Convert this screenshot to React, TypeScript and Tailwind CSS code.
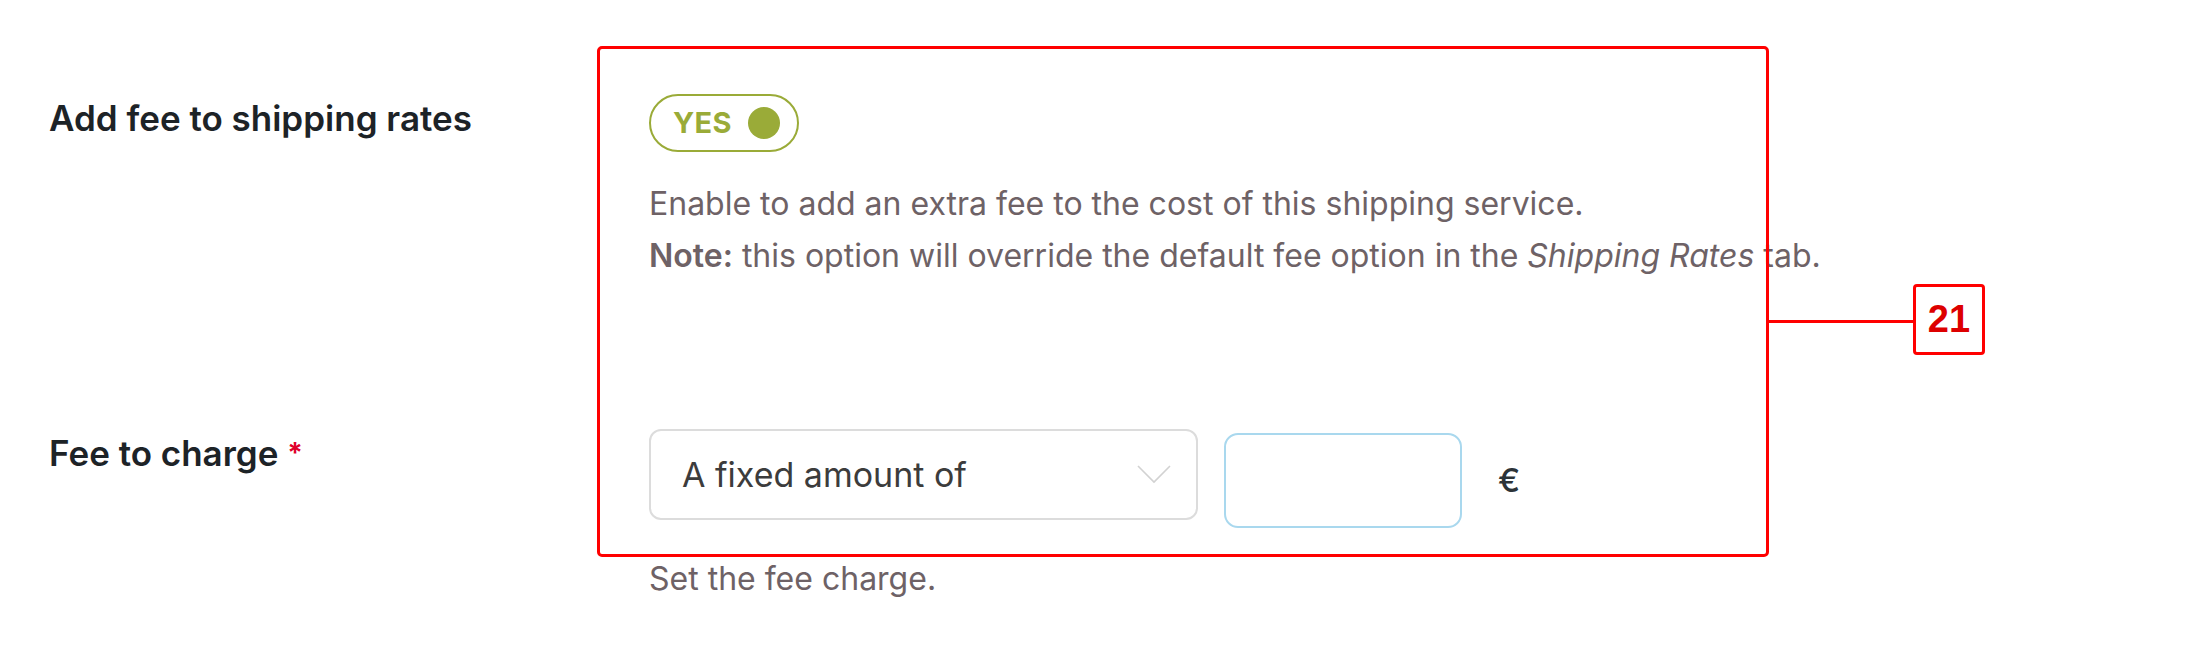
export default function App() {
  return (
    <div className="relative w-[2202px] h-[658px] bg-white font-['Inter',sans-serif] overflow-hidden">
      <div className="pl-[49px] pt-[94px]">
        <div className="flex items-start">
          <div className="w-[600px] pt-[4px] text-[35px] leading-[40px] font-semibold text-[#1d2327]">
            Add fee to shipping rates
          </div>
          <div>
            <Toggle />
            <div className="mt-[26px] text-[32px] leading-[52px] text-[#6e6266]">
              <p>Enable to add an extra fee to the cost of this shipping service.</p>
              <p>
                <span className="font-semibold">Note:</span> this option will override the default fee
                option in the <em>Shipping Rates</em> tab.
              </p>
            </div>
          </div>
        </div>

        <div className="flex items-start mt-[147px]">
          <div className="w-[600px] pt-[4px] text-[35px] leading-[40px] font-semibold text-[#1d2327]">
            Fee to charge <span className="text-[#e0002a] font-bold align-top text-[28px]">*</span>
          </div>
          <div>
            <div className="flex items-start">
              <div className="w-[549px] h-[91px] border-2 border-[#dcdcdc] rounded-[12px] flex items-center justify-between pl-[31px] pr-[25px]">
                <span className="text-[34px] text-[#3c3c3c]">A fixed amount of</span>
                <svg width="34" height="19" viewBox="0 0 34 19" fill="none">
                  <polyline points="1,1 17,17 33,1" stroke="#d2d2d2" strokeWidth="1.6" />
                </svg>
              </div>
              <div className="ml-[26px] mt-[4px] w-[238px] h-[95px] border-2 border-[#a9d8ee] rounded-[14px]" />
              <div className="ml-[36px] mt-[4px] h-[95px] flex items-center text-[33px] font-medium text-[#2c3338]">
                €
              </div>
            </div>
            <p className="mt-[33px] text-[32px] leading-[36px] text-[#6e6266]">Set the fee charge.</p>
          </div>
        </div>
      </div>

      {/* annotation overlay */}
      <div className="absolute left-[597px] top-[46px] w-[1172px] h-[511px] border-[3px] border-[#ff0000] rounded-[5px]" />
      <div className="absolute left-[1768px] top-[320px] w-[146px] h-[3px] bg-[#ff0000]" />
      <div className="absolute left-[1913px] top-[284px] w-[72px] h-[71px] border-[3px] border-[#ff0000] rounded-[4px] bg-white flex items-center justify-center text-[38px] font-bold text-[#dd0000] font-['Liberation_Sans',sans-serif]">
        21
      </div>
    </div>
  );
}

function Toggle() {
  return (
    <div className="w-[150px] h-[58px] border-2 border-[#9aab38] rounded-full flex items-center pl-[22px]">
      <span className="text-[29px] font-bold text-[#9aab38] tracking-[0.3px]">YES</span>
      <span className="ml-[16px] w-[32px] h-[32px] rounded-full bg-[#9aab38]" />
    </div>
  );
}
